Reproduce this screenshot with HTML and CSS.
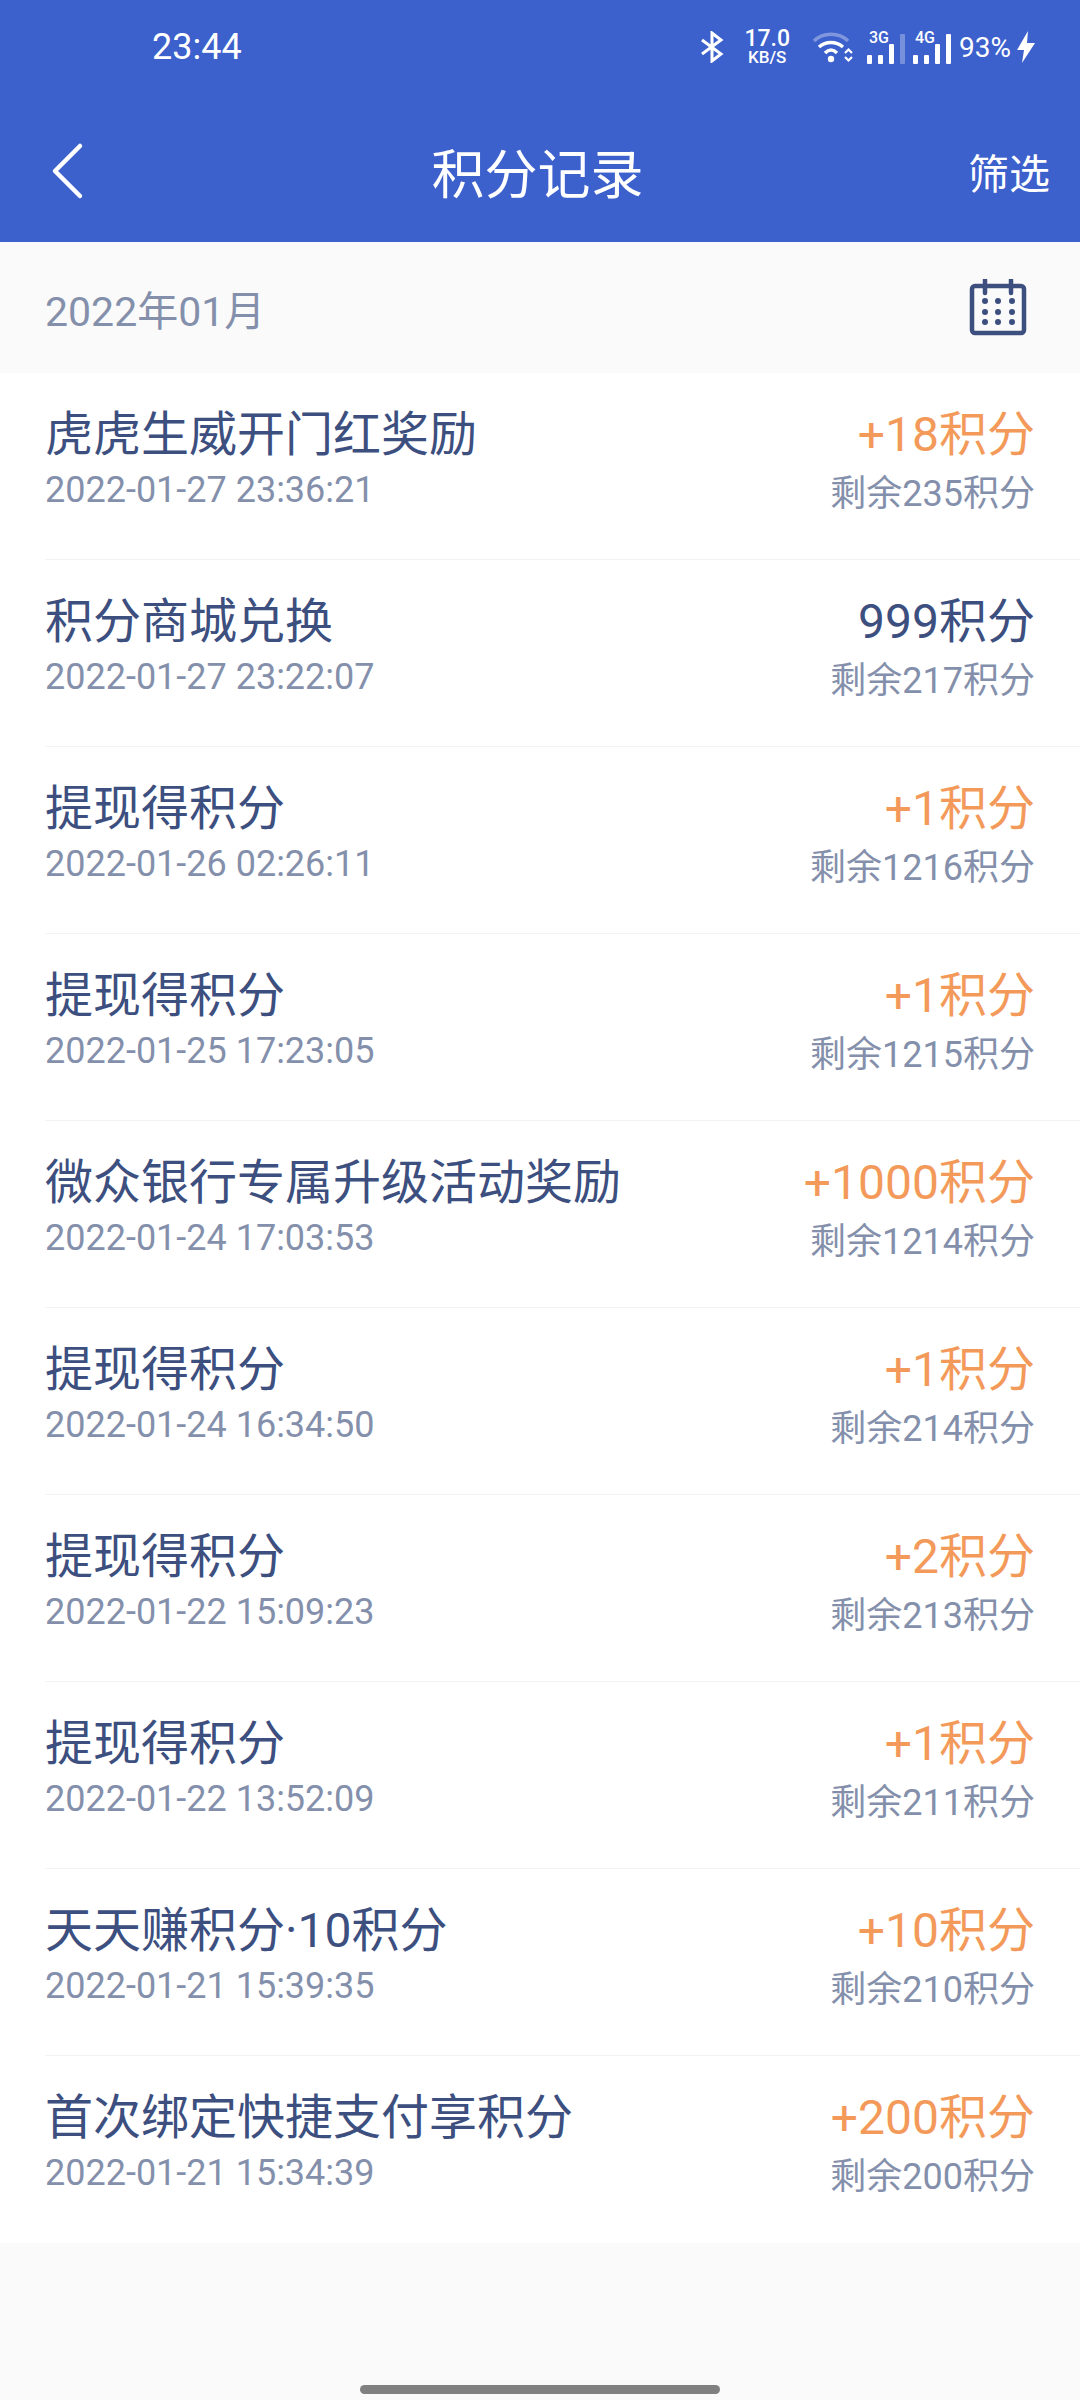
FILE: index.html
```html
<!DOCTYPE html>
<html lang="zh-CN">
<head>
    <meta charset="UTF-8">
    <meta name="viewport" content="width=device-width, initial-scale=1.0">
    <title>积分记录</title>
    <link rel="stylesheet" href="styles.css">
</head>
<body>
<div class="top">
    <div class="status">
        <span class="clock">23:44</span>
        <div class="status-icons">
            <svg class="bt" width="24" height="32" viewBox="0 0 24 32"><path d="M2 9l19 14-9 7V2l9 7L2 23" fill="none" stroke="#fff" stroke-width="3"/></svg>
            <div class="speed"><b>17.0</b><b class="unit">KB/S</b></div>
            <svg class="wifi" width="42" height="32" viewBox="0 0 42 32">
                <path d="M2 10C11 1 27 1 36 10" fill="none" stroke="#fff" stroke-opacity=".35" stroke-width="3.5"/>
                <path d="M7 16C14 10 24 10 31 16M13 22C17 18 21 18 25 22" fill="none" stroke="#fff" stroke-width="3.5"/>
                <circle cx="19" cy="28" r="3.2" fill="#fff"/>
                <path d="M33 22l3.500-3.500 3.500 3.500M33 26l3.500 3.500 3.500-3.500" fill="none" stroke="#fff" stroke-width="2.200"/>
            </svg>
            <div class="signal">
                <span class="net">3G</span>
                <div class="bars"><i class="b1"></i><i class="b2"></i><i class="b3"></i><i class="b4 dim"></i></div>
            </div>
            <div class="signal">
                <span class="net">4G</span>
                <div class="bars"><i class="b1"></i><i class="b2"></i><i class="b3"></i><i class="b4"></i></div>
            </div>
            <span class="battery">93%</span>
            <svg class="bolt" width="20" height="34" viewBox="0 0 20 34"><path d="M12 1L1 20h7L6 33 19 13h-8z" fill="#fff"/></svg>
        </div>
    </div>
    <div class="nav">
        <svg class="back" width="34" height="58" viewBox="0 0 34 58"><path d="M30 4L5 29l25 25" fill="none" stroke="#fff" stroke-width="4.500" stroke-linecap="round" stroke-linejoin="round"/></svg>
        <span class="nav-title">积分记录</span>
        <span class="nav-filter">筛选</span>
    </div>
</div>

<div class="month">
    <span>2022年01月</span>
    <svg width="58" height="58" viewBox="0 0 58 58">
        <rect x="3" y="7" width="52" height="47" rx="3" fill="none" stroke="#3c4f7f" stroke-width="4.500"/>
        <path d="M16 1v13M42 1v13" stroke="#3c4f7f" stroke-width="4.500" stroke-linecap="round"/>
        <g fill="#3c4f7f">
            <circle cx="16" cy="22" r="3"/><circle cx="29" cy="22" r="3"/><circle cx="43" cy="22" r="3"/>
            <circle cx="16" cy="33" r="3"/><circle cx="29" cy="33" r="3"/><circle cx="43" cy="33" r="3"/>
            <circle cx="16" cy="43" r="3"/><circle cx="29" cy="43" r="3"/><circle cx="43" cy="43" r="3"/>
        </g>
    </svg>
</div>

<div class="list">
    <div class="row">
        <div class="line"><span class="name">虎虎生威开门红奖励</span><span class="points plus">+18积分</span></div>
        <div class="line sub"><span>2022-01-27 23:36:21</span><span>剩余235积分</span></div>
    </div>
    <div class="row">
        <div class="line"><span class="name">积分商城兑换</span><span class="points">999积分</span></div>
        <div class="line sub"><span>2022-01-27 23:22:07</span><span>剩余217积分</span></div>
    </div>
    <div class="row">
        <div class="line"><span class="name">提现得积分</span><span class="points plus">+1积分</span></div>
        <div class="line sub"><span>2022-01-26 02:26:11</span><span>剩余1216积分</span></div>
    </div>
    <div class="row">
        <div class="line"><span class="name">提现得积分</span><span class="points plus">+1积分</span></div>
        <div class="line sub"><span>2022-01-25 17:23:05</span><span>剩余1215积分</span></div>
    </div>
    <div class="row">
        <div class="line"><span class="name">微众银行专属升级活动奖励</span><span class="points plus">+1000积分</span></div>
        <div class="line sub"><span>2022-01-24 17:03:53</span><span>剩余1214积分</span></div>
    </div>
    <div class="row">
        <div class="line"><span class="name">提现得积分</span><span class="points plus">+1积分</span></div>
        <div class="line sub"><span>2022-01-24 16:34:50</span><span>剩余214积分</span></div>
    </div>
    <div class="row">
        <div class="line"><span class="name">提现得积分</span><span class="points plus">+2积分</span></div>
        <div class="line sub"><span>2022-01-22 15:09:23</span><span>剩余213积分</span></div>
    </div>
    <div class="row">
        <div class="line"><span class="name">提现得积分</span><span class="points plus">+1积分</span></div>
        <div class="line sub"><span>2022-01-22 13:52:09</span><span>剩余211积分</span></div>
    </div>
    <div class="row">
        <div class="line"><span class="name">天天赚积分·10积分</span><span class="points plus">+10积分</span></div>
        <div class="line sub"><span>2022-01-21 15:39:35</span><span>剩余210积分</span></div>
    </div>
    <div class="row">
        <div class="line"><span class="name">首次绑定快捷支付享积分</span><span class="points plus">+200积分</span></div>
        <div class="line sub"><span>2022-01-21 15:34:39</span><span>剩余200积分</span></div>
    </div>
</div>

<div class="home-wrap"><div class="home"></div></div>
</body>
</html>
```

FILE: styles.css
```css
* {
    box-sizing: border-box;
}

body {
    margin: 0;
    height: 2400px;
    display: flex;
    flex-direction: column;
    background-color: #fafafa;
    font-family: Roboto, "Noto Sans CJK SC", sans-serif;
    overflow: hidden;
}

.top {
    height: 242px;
    background-color: #3c60cc;
    color: white;
}

.status {
    height: 100px;
    padding: 24px 44px 0 152px;
    display: flex;
    justify-content: space-between;
}

.clock {
    font-size: 36px;
    line-height: 46px;
}

.status-icons {
    display: flex;
    align-items: center;
    height: 46px;
}

.bt {
    margin-right: 20px;
}

.speed {
    display: flex;
    flex-direction: column;
    align-items: center;
    margin-right: 22px;
}

.speed b {
    font-size: 23px;
    font-weight: 500;
    line-height: 20px;
}

.speed .unit {
    font-size: 17px;
    line-height: 16px;
}

.wifi {
    margin-right: 15px;
}

.signal {
    display: flex;
    align-items: flex-end;
    height: 34px;
    margin-right: 10px;
}

.signal + .signal {
    margin-right: 8px;
}

.signal:first-of-type {
    margin-right: 18px;
}

.net {
    font-size: 16px;
    font-weight: 500;
    line-height: 16px;
    align-self: flex-start;
    margin-right: -14px;
}

.bars {
    display: flex;
    align-items: flex-end;
    gap: 6px;
    padding-top: 4px;
    margin-left: -8px;
}

.bars i {
    display: block;
    width: 5px;
    border-radius: 1px;
    background-color: white;
}

.bars .b1 {
    height: 9px;
}

.bars .b2 {
    height: 9px;
}

.bars .b3 {
    height: 20px;
}

.bars .b4 {
    height: 30px;
}

.bars .dim {
    opacity: .3;
}

.battery {
    font-size: 28px;
    margin-right: 5px;
}

.nav {
    height: 142px;
    padding: 0 30px 0 50px;
    display: flex;
    align-items: center;
    justify-content: space-between;
    position: relative;
}

.nav-title {
    position: absolute;
    left: 0;
    right: 0;
    padding-right: 5px;
    text-align: center;
    font-size: 53px;
}

.nav-filter {
    font-size: 41px;
}

.month {
    height: 131px;
    padding: 0 53px 0 45px;
    display: flex;
    align-items: center;
    justify-content: space-between;
    font-size: 41px;
    color: #8490ab;
}

.list {
    background-color: white;
}

.row {
    height: 187px;
    margin-left: 45px;
    padding: 22px 45px 0 0;
    border-bottom: 1px solid #f3f3f3;
}

.row:last-child {
    border-bottom: none;
}

.line {
    display: flex;
    justify-content: space-between;
    align-items: center;
    height: 70px;
    color: #3c4f7f;
}

.name {
    font-size: 48px;
}

.points {
    font-size: 48px;
}

.plus {
    color: #f39a5b;
}

.sub {
    height: 50px;
    font-size: 36px;
    color: #8490ab;
}

.home-wrap {
    flex: 1;
    display: flex;
    align-items: flex-end;
    justify-content: center;
    padding-bottom: 6px;
}

.home {
    width: 360px;
    height: 9px;
    border-radius: 5px;
    background-color: #808080;
}
```
